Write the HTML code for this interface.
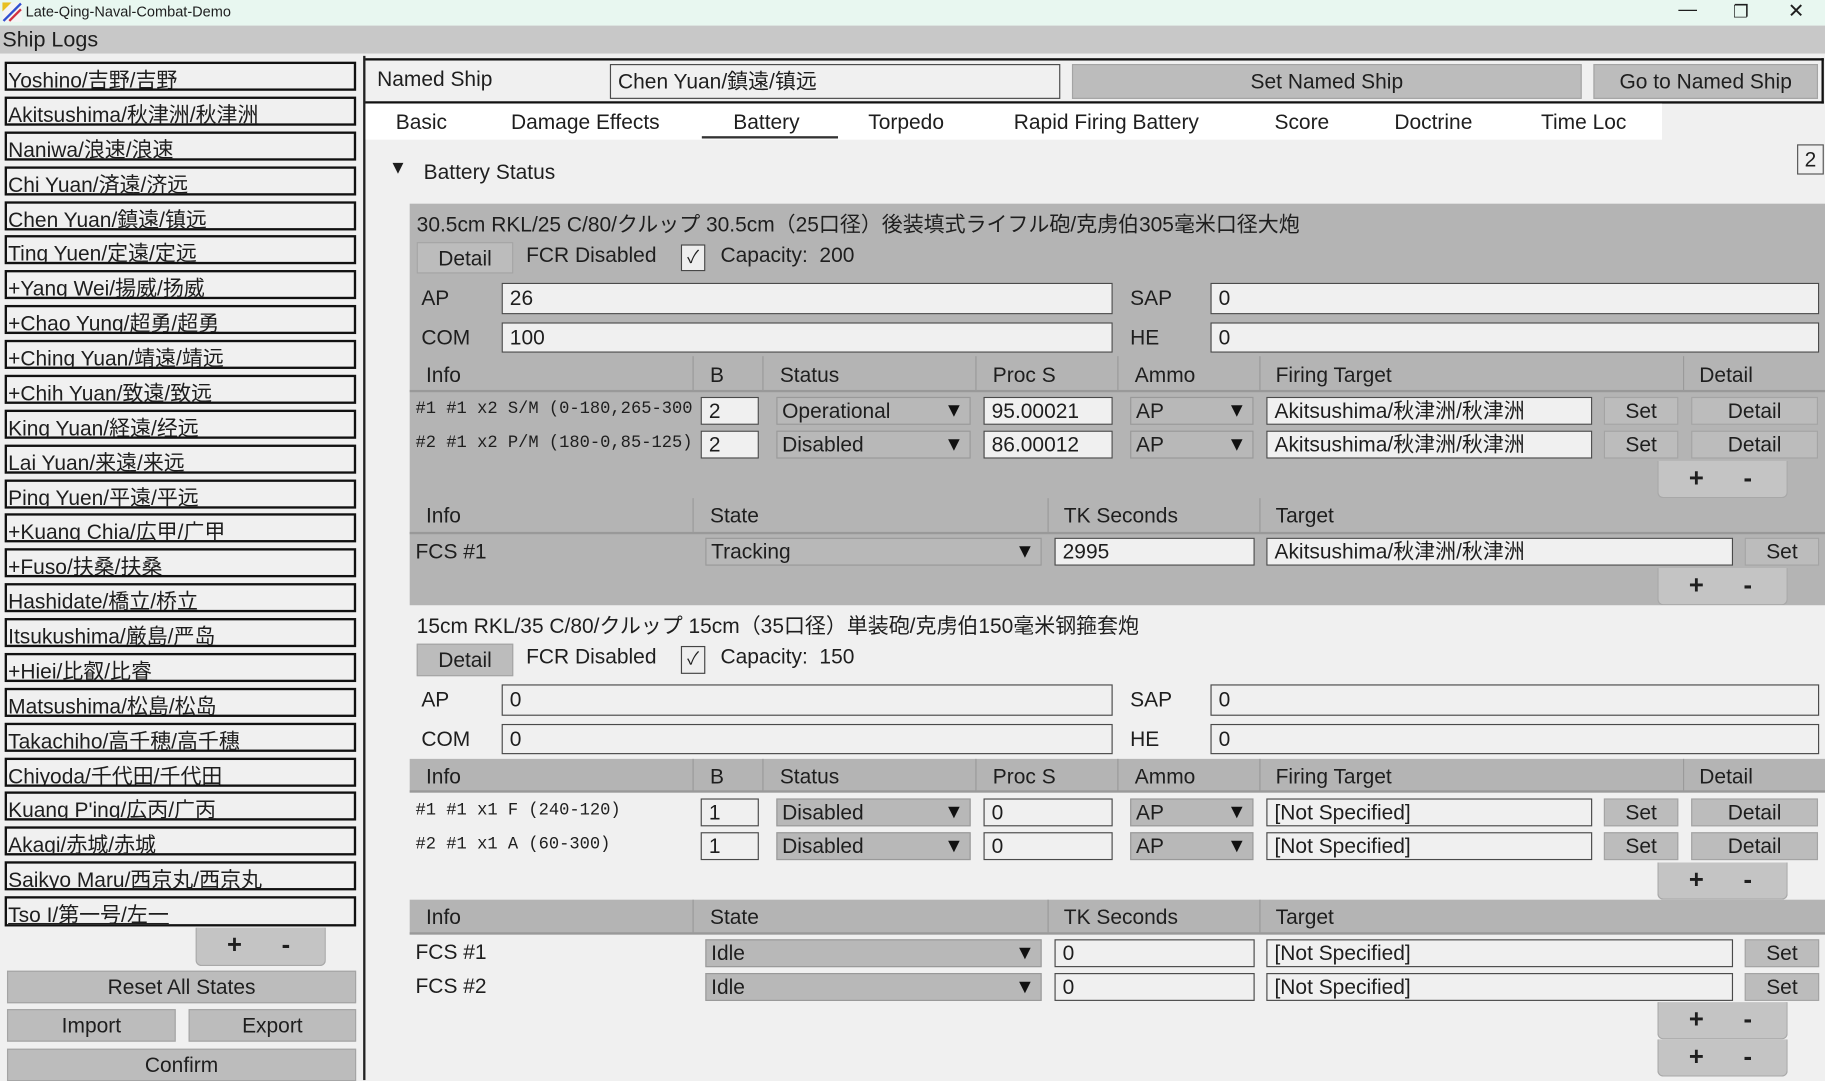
<!DOCTYPE html>
<html><head><meta charset="utf-8"><style>
html,body{margin:0;padding:0;width:1825px;height:1080px;overflow:hidden;background:#f0f0f0}
#w{position:absolute;left:0;top:0;width:1568px;height:928px;transform:scale(1.16390);transform-origin:0 0;font-family:"Liberation Sans","Noto Sans CJK JP",sans-serif;color:#1e1e1e;font-size:18px}
.a{position:absolute;box-sizing:border-box;white-space:nowrap}
.in{background:#f0f0f0;border:1px solid #4a4a4a;padding-left:6px;overflow:hidden}
.dd{background:#b8b8b8;border:1px solid #999;padding-left:4px}
.dd::after{content:"▼";position:absolute;right:5px;top:0;font-size:17px;color:#111}
.btn{background:#bcbcbc;border:1px solid #a4a4a4;text-align:center}
.g{background:#b4b4b4}
.m{font-family:"Liberation Mono","DejaVu Sans Mono",monospace;font-size:14.7px}
.li{background:#f0f0f0;border:2px solid #111;text-decoration:underline;padding-left:1px;line-height:29px;overflow:hidden}
.pm{background:#c4c4c4;border:1px solid #a8a8a8;border-top:none;border-radius:0 0 5px 5px;font-weight:bold;font-size:22px}
.pm span{position:absolute;top:2px}
.sep{position:absolute;width:1px;background:#9a9a9a}
</style></head><body><div id="w">
<div class="a" style="left:0;top:0;width:1568px;height:22px;background:#e8f7f0"></div>
<svg class="a" style="left:2px;top:2px" width="17" height="17"><rect width="17" height="17" fill="#f4f4f4"/><polygon points="0,0 8,0 0,8" fill="#e8c020"/><line x1="1" y1="16" x2="16" y2="1" stroke="#3050d0" stroke-width="2"/><line x1="6" y1="16" x2="16" y2="6" stroke="#d03040" stroke-width="2"/></svg>
<div class="a" style="left:22px;top:3px;font-size:12.5px">Late-Qing-Naval-Combat-Demo</div>
<div class="a" style="left:1442px;top:0;font-size:16px">—</div>
<div class="a" style="left:1489px;top:1px;font-size:15px">❐</div>
<div class="a" style="left:1536px;top:0;font-size:17px">✕</div>
<div class="a" style="left:0;top:22px;width:1568px;height:24px;background:#c8c8c8"></div>
<div class="a" style="left:2px;top:23px;font-size:18.5px">Ship Logs</div>
<div class="a li" style="left:4px;top:53px;width:302px;height:25px">Yoshino/吉野/吉野</div>
<div class="a li" style="left:4px;top:83px;width:302px;height:25px">Akitsushima/秋津洲/秋津洲</div>
<div class="a li" style="left:4px;top:112.7px;width:302px;height:25px">Naniwa/浪速/浪速</div>
<div class="a li" style="left:4px;top:142.6px;width:302px;height:25px">Chi Yuan/済遠/济远</div>
<div class="a li" style="left:4px;top:172.5px;width:302px;height:25px">Chen Yuan/鎮遠/镇远</div>
<div class="a li" style="left:4px;top:202.4px;width:302px;height:25px">Ting Yuen/定遠/定远</div>
<div class="a li" style="left:4px;top:232.2px;width:302px;height:25px">+Yang Wei/揚威/扬威</div>
<div class="a li" style="left:4px;top:262.1px;width:302px;height:25px">+Chao Yung/超勇/超勇</div>
<div class="a li" style="left:4px;top:292px;width:302px;height:25px">+Ching Yuan/靖遠/靖远</div>
<div class="a li" style="left:4px;top:321.9px;width:302px;height:25px">+Chih Yuan/致遠/致远</div>
<div class="a li" style="left:4px;top:351.7px;width:302px;height:25px">King Yuan/経遠/经远</div>
<div class="a li" style="left:4px;top:381.6px;width:302px;height:25px">Lai Yuan/来遠/来远</div>
<div class="a li" style="left:4px;top:411.5px;width:302px;height:25px">Ping Yuen/平遠/平远</div>
<div class="a li" style="left:4px;top:441.4px;width:302px;height:25px">+Kuang Chia/広甲/广甲</div>
<div class="a li" style="left:4px;top:471.2px;width:302px;height:25px">+Fuso/扶桑/扶桑</div>
<div class="a li" style="left:4px;top:501.1px;width:302px;height:25px">Hashidate/橋立/桥立</div>
<div class="a li" style="left:4px;top:531px;width:302px;height:25px">Itsukushima/厳島/严岛</div>
<div class="a li" style="left:4px;top:560.9px;width:302px;height:25px">+Hiei/比叡/比睿</div>
<div class="a li" style="left:4px;top:590.7px;width:302px;height:25px">Matsushima/松島/松岛</div>
<div class="a li" style="left:4px;top:620.6px;width:302px;height:25px">Takachiho/高千穂/高千穗</div>
<div class="a li" style="left:4px;top:650.5px;width:302px;height:25px">Chiyoda/千代田/千代田</div>
<div class="a li" style="left:4px;top:680.4px;width:302px;height:25px">Kuang P'ing/広丙/广丙</div>
<div class="a li" style="left:4px;top:710.2px;width:302px;height:25px">Akagi/赤城/赤城</div>
<div class="a li" style="left:4px;top:740.1px;width:302px;height:25px">Saikyo Maru/西京丸/西京丸</div>
<div class="a li" style="left:4px;top:770px;width:302px;height:26px">Tso I/第一号/左一</div>
<div class="a pm" style="left:168px;top:797px;width:112px;height:33px"><span style="left:26px">+</span><span style="left:73px">-</span></div>
<div class="a btn" style="left:6px;top:834px;width:300px;height:28px;line-height:27px">Reset All States</div>
<div class="a btn" style="left:6px;top:867px;width:145px;height:28px;line-height:27px">Import</div>
<div class="a btn" style="left:162px;top:867px;width:144px;height:28px;line-height:27px">Export</div>
<div class="a btn" style="left:6px;top:901px;width:300px;height:28px;line-height:27px">Confirm</div>
<div class="a" style="left:312px;top:48px;width:2px;height:880px;background:#222"></div>
<div class="a" style="left:314px;top:50px;width:1253px;height:39px;border:2px solid #111;border-left:none"></div>
<div class="a" style="left:324px;top:58px">Named Ship</div>
<div class="a in" style="left:524px;top:55px;width:387px;height:30px;line-height:28px">Chen Yuan/鎮遠/镇远</div>
<div class="a btn" style="left:921px;top:55px;width:438px;height:30px;line-height:28px">Set Named Ship</div>
<div class="a btn" style="left:1369px;top:55px;width:193px;height:30px;line-height:28px">Go to Named Ship</div>
<div class="a" style="left:314px;top:89px;width:1114px;height:31px;background:#fff"></div>
<div class="a" style="left:340px;top:95px">Basic</div>
<div class="a" style="left:439px;top:95px">Damage Effects</div>
<div class="a" style="left:630px;top:95px">Battery</div>
<div class="a" style="left:603px;top:117px;width:117px;height:2px;background:#333"></div>
<div class="a" style="left:746px;top:95px">Torpedo</div>
<div class="a" style="left:871px;top:95px">Rapid Firing Battery</div>
<div class="a" style="left:1095px;top:95px">Score</div>
<div class="a" style="left:1198px;top:95px">Doctrine</div>
<div class="a" style="left:1324px;top:95px">Time Loc</div>
<div class="a" style="left:1544px;top:124px;width:23px;height:26px;border:1px solid #555;text-align:center;line-height:24px">2</div>
<div class="a" style="left:334px;top:136px;font-size:16px">▼</div>
<div class="a" style="left:364px;top:138px">Battery Status</div>

<div class="a g" style="left:352px;top:175px;width:1216px;height:345px"></div>
<div class="a" style="left:358px;top:179px">30.5cm RKL/25 C/80/クルップ 30.5cm（25口径）後装填式ライフル砲/克虏伯305毫米口径大炮</div>
<div class="a btn" style="left:358px;top:208px;width:83px;height:27px;line-height:26px">Detail</div>
<div class="a" style="left:452px;top:209px">FCR Disabled</div>
<div class="a" style="left:585px;top:210px;width:21px;height:23px;border:1px solid #444;background:#eee;font-size:15px;text-align:center;line-height:22px">✓</div>
<div class="a" style="left:619px;top:209px">Capacity:&nbsp; 200</div>
<div class="a" style="left:362px;top:246px">AP</div>
<div class="a in" style="left:431px;top:243px;width:525px;height:27px;line-height:25px">26</div>
<div class="a" style="left:971px;top:246px">SAP</div>
<div class="a in" style="left:1040px;top:243px;width:523px;height:27px;line-height:25px">0</div>
<div class="a" style="left:362px;top:280px">COM</div>
<div class="a in" style="left:431px;top:277px;width:525px;height:26px;line-height:24px">100</div>
<div class="a" style="left:971px;top:280px">HE</div>
<div class="a in" style="left:1040px;top:277px;width:523px;height:26px;line-height:24px">0</div>
<div class="a" style="left:352px;top:335px;width:1216px;height:2px;background:#999"></div>
<div class="sep" style="left:595px;top:306px;height:30px"></div><div class="sep" style="left:655px;top:306px;height:30px"></div><div class="sep" style="left:838px;top:306px;height:30px"></div><div class="sep" style="left:960px;top:306px;height:30px"></div><div class="sep" style="left:1082px;top:306px;height:30px"></div><div class="sep" style="left:1446px;top:306px;height:30px"></div>
<div class="a" style="left:366px;top:312px">Info</div><div class="a" style="left:610px;top:312px">B</div><div class="a" style="left:670px;top:312px">Status</div><div class="a" style="left:853px;top:312px">Proc S</div><div class="a" style="left:975px;top:312px">Ammo</div><div class="a" style="left:1096px;top:312px">Firing Target</div><div class="a" style="left:1460px;top:312px">Detail</div>
<div class="a m" style="left:357px;top:344px;width:238px;overflow:hidden">#1 #1 x2 S/M (0-180,265-300)</div>
<div class="a in" style="left:602px;top:341px;width:50px;height:24px;line-height:22px">2</div>
<div class="a dd" style="left:667px;top:341px;width:167px;height:24px;line-height:22px">Operational</div>
<div class="a in" style="left:845px;top:341px;width:111px;height:24px;line-height:22px">95.00021</div>
<div class="a dd" style="left:971px;top:341px;width:106px;height:24px;line-height:22px">AP</div>
<div class="a in" style="left:1088px;top:341px;width:280px;height:24px;line-height:22px">Akitsushima/秋津洲/秋津洲</div>
<div class="a btn" style="left:1378px;top:341px;width:64px;height:24px;line-height:22px">Set</div>
<div class="a btn" style="left:1453px;top:341px;width:109px;height:24px;line-height:22px">Detail</div>
<div class="a m" style="left:357px;top:373px;width:238px;overflow:hidden">#2 #1 x2 P/M (180-0,85-125)</div>
<div class="a in" style="left:602px;top:370px;width:50px;height:24px;line-height:22px">2</div>
<div class="a dd" style="left:667px;top:370px;width:167px;height:24px;line-height:22px">Disabled</div>
<div class="a in" style="left:845px;top:370px;width:111px;height:24px;line-height:22px">86.00012</div>
<div class="a dd" style="left:971px;top:370px;width:106px;height:24px;line-height:22px">AP</div>
<div class="a in" style="left:1088px;top:370px;width:280px;height:24px;line-height:22px">Akitsushima/秋津洲/秋津洲</div>
<div class="a btn" style="left:1378px;top:370px;width:64px;height:24px;line-height:22px">Set</div>
<div class="a btn" style="left:1453px;top:370px;width:109px;height:24px;line-height:22px">Detail</div>
<div class="a pm" style="left:1424px;top:396px;width:112px;height:32px"><span style="left:26px">+</span><span style="left:73px">-</span></div>
<div class="a" style="left:352px;top:457px;width:1216px;height:2px;background:#999"></div>
<div class="sep" style="left:595px;top:428px;height:29px"></div><div class="sep" style="left:900px;top:428px;height:29px"></div><div class="sep" style="left:1082px;top:428px;height:29px"></div>
<div class="a" style="left:366px;top:433px">Info</div><div class="a" style="left:610px;top:433px">State</div><div class="a" style="left:914px;top:433px">TK Seconds</div><div class="a" style="left:1096px;top:433px">Target</div>
<div class="a" style="left:357px;top:464px">FCS #1</div>
<div class="a dd" style="left:606px;top:462px;width:289px;height:24px;line-height:22px">Tracking</div>
<div class="a in" style="left:906px;top:462px;width:172px;height:24px;line-height:22px">2995</div>
<div class="a in" style="left:1088px;top:462px;width:401px;height:24px;line-height:22px">Akitsushima/秋津洲/秋津洲</div>
<div class="a btn" style="left:1499px;top:462px;width:64px;height:24px;line-height:22px">Set</div>
<div class="a pm" style="left:1424px;top:488px;width:112px;height:32px"><span style="left:26px">+</span><span style="left:73px">-</span></div>

<div class="a" style="left:358px;top:524px">15cm RKL/35 C/80/クルップ 15cm（35口径）単装砲/克虏伯150毫米钢箍套炮</div>
<div class="a btn" style="left:358px;top:553px;width:83px;height:28px;line-height:27px">Detail</div>
<div class="a" style="left:452px;top:554px">FCR Disabled</div>
<div class="a" style="left:585px;top:555px;width:21px;height:24px;border:1px solid #444;background:#eee;font-size:15px;text-align:center;line-height:22px">✓</div>
<div class="a" style="left:619px;top:554px">Capacity:&nbsp; 150</div>
<div class="a" style="left:362px;top:591px">AP</div>
<div class="a in" style="left:431px;top:588px;width:525px;height:27px;line-height:25px">0</div>
<div class="a" style="left:971px;top:591px">SAP</div>
<div class="a in" style="left:1040px;top:588px;width:523px;height:27px;line-height:25px">0</div>
<div class="a" style="left:362px;top:625px">COM</div>
<div class="a in" style="left:431px;top:622px;width:525px;height:26px;line-height:24px">0</div>
<div class="a" style="left:971px;top:625px">HE</div>
<div class="a in" style="left:1040px;top:622px;width:523px;height:26px;line-height:24px">0</div>
<div class="a g" style="left:352px;top:652px;width:1216px;height:29px;border-bottom:2px solid #999"></div>
<div class="sep" style="left:595px;top:652px;height:28px"></div><div class="sep" style="left:655px;top:652px;height:28px"></div><div class="sep" style="left:838px;top:652px;height:28px"></div><div class="sep" style="left:960px;top:652px;height:28px"></div><div class="sep" style="left:1082px;top:652px;height:28px"></div><div class="sep" style="left:1446px;top:652px;height:28px"></div>
<div class="a" style="left:366px;top:657px">Info</div><div class="a" style="left:610px;top:657px">B</div><div class="a" style="left:670px;top:657px">Status</div><div class="a" style="left:853px;top:657px">Proc S</div><div class="a" style="left:975px;top:657px">Ammo</div><div class="a" style="left:1096px;top:657px">Firing Target</div><div class="a" style="left:1460px;top:657px">Detail</div>
<div class="a m" style="left:357px;top:689px">#1 #1 x1 F (240-120)</div>
<div class="a in" style="left:602px;top:686px;width:50px;height:24px;line-height:22px">1</div>
<div class="a dd" style="left:667px;top:686px;width:167px;height:24px;line-height:22px">Disabled</div>
<div class="a in" style="left:845px;top:686px;width:111px;height:24px;line-height:22px">0</div>
<div class="a dd" style="left:971px;top:686px;width:106px;height:24px;line-height:22px">AP</div>
<div class="a in" style="left:1088px;top:686px;width:280px;height:24px;line-height:22px">[Not Specified]</div>
<div class="a btn" style="left:1378px;top:686px;width:64px;height:24px;line-height:22px">Set</div>
<div class="a btn" style="left:1453px;top:686px;width:109px;height:24px;line-height:22px">Detail</div>
<div class="a m" style="left:357px;top:718px">#2 #1 x1 A (60-300)</div>
<div class="a in" style="left:602px;top:715px;width:50px;height:24px;line-height:22px">1</div>
<div class="a dd" style="left:667px;top:715px;width:167px;height:24px;line-height:22px">Disabled</div>
<div class="a in" style="left:845px;top:715px;width:111px;height:24px;line-height:22px">0</div>
<div class="a dd" style="left:971px;top:715px;width:106px;height:24px;line-height:22px">AP</div>
<div class="a in" style="left:1088px;top:715px;width:280px;height:24px;line-height:22px">[Not Specified]</div>
<div class="a btn" style="left:1378px;top:715px;width:64px;height:24px;line-height:22px">Set</div>
<div class="a btn" style="left:1453px;top:715px;width:109px;height:24px;line-height:22px">Detail</div>
<div class="a pm" style="left:1424px;top:741px;width:112px;height:32px"><span style="left:26px">+</span><span style="left:73px">-</span></div>
<div class="a g" style="left:352px;top:773px;width:1216px;height:30px;border-bottom:2px solid #999"></div>
<div class="sep" style="left:595px;top:773px;height:28px"></div><div class="sep" style="left:900px;top:773px;height:28px"></div><div class="sep" style="left:1082px;top:773px;height:28px"></div>
<div class="a" style="left:366px;top:778px">Info</div><div class="a" style="left:610px;top:778px">State</div><div class="a" style="left:914px;top:778px">TK Seconds</div><div class="a" style="left:1096px;top:778px">Target</div>
<div class="a" style="left:357px;top:808px">FCS #1</div>
<div class="a dd" style="left:606px;top:807px;width:289px;height:24px;line-height:22px">Idle</div>
<div class="a in" style="left:906px;top:807px;width:172px;height:24px;line-height:22px">0</div>
<div class="a in" style="left:1088px;top:807px;width:401px;height:24px;line-height:22px">[Not Specified]</div>
<div class="a btn" style="left:1499px;top:807px;width:64px;height:24px;line-height:22px">Set</div>
<div class="a" style="left:357px;top:837px">FCS #2</div>
<div class="a dd" style="left:606px;top:836px;width:289px;height:24px;line-height:22px">Idle</div>
<div class="a in" style="left:906px;top:836px;width:172px;height:24px;line-height:22px">0</div>
<div class="a in" style="left:1088px;top:836px;width:401px;height:24px;line-height:22px">[Not Specified]</div>
<div class="a btn" style="left:1499px;top:836px;width:64px;height:24px;line-height:22px">Set</div>
<div class="a pm" style="left:1424px;top:861px;width:112px;height:32px"><span style="left:26px">+</span><span style="left:73px">-</span></div>
<div class="a pm" style="left:1424px;top:893px;width:112px;height:32px"><span style="left:26px">+</span><span style="left:73px">-</span></div>
</div></body></html>
